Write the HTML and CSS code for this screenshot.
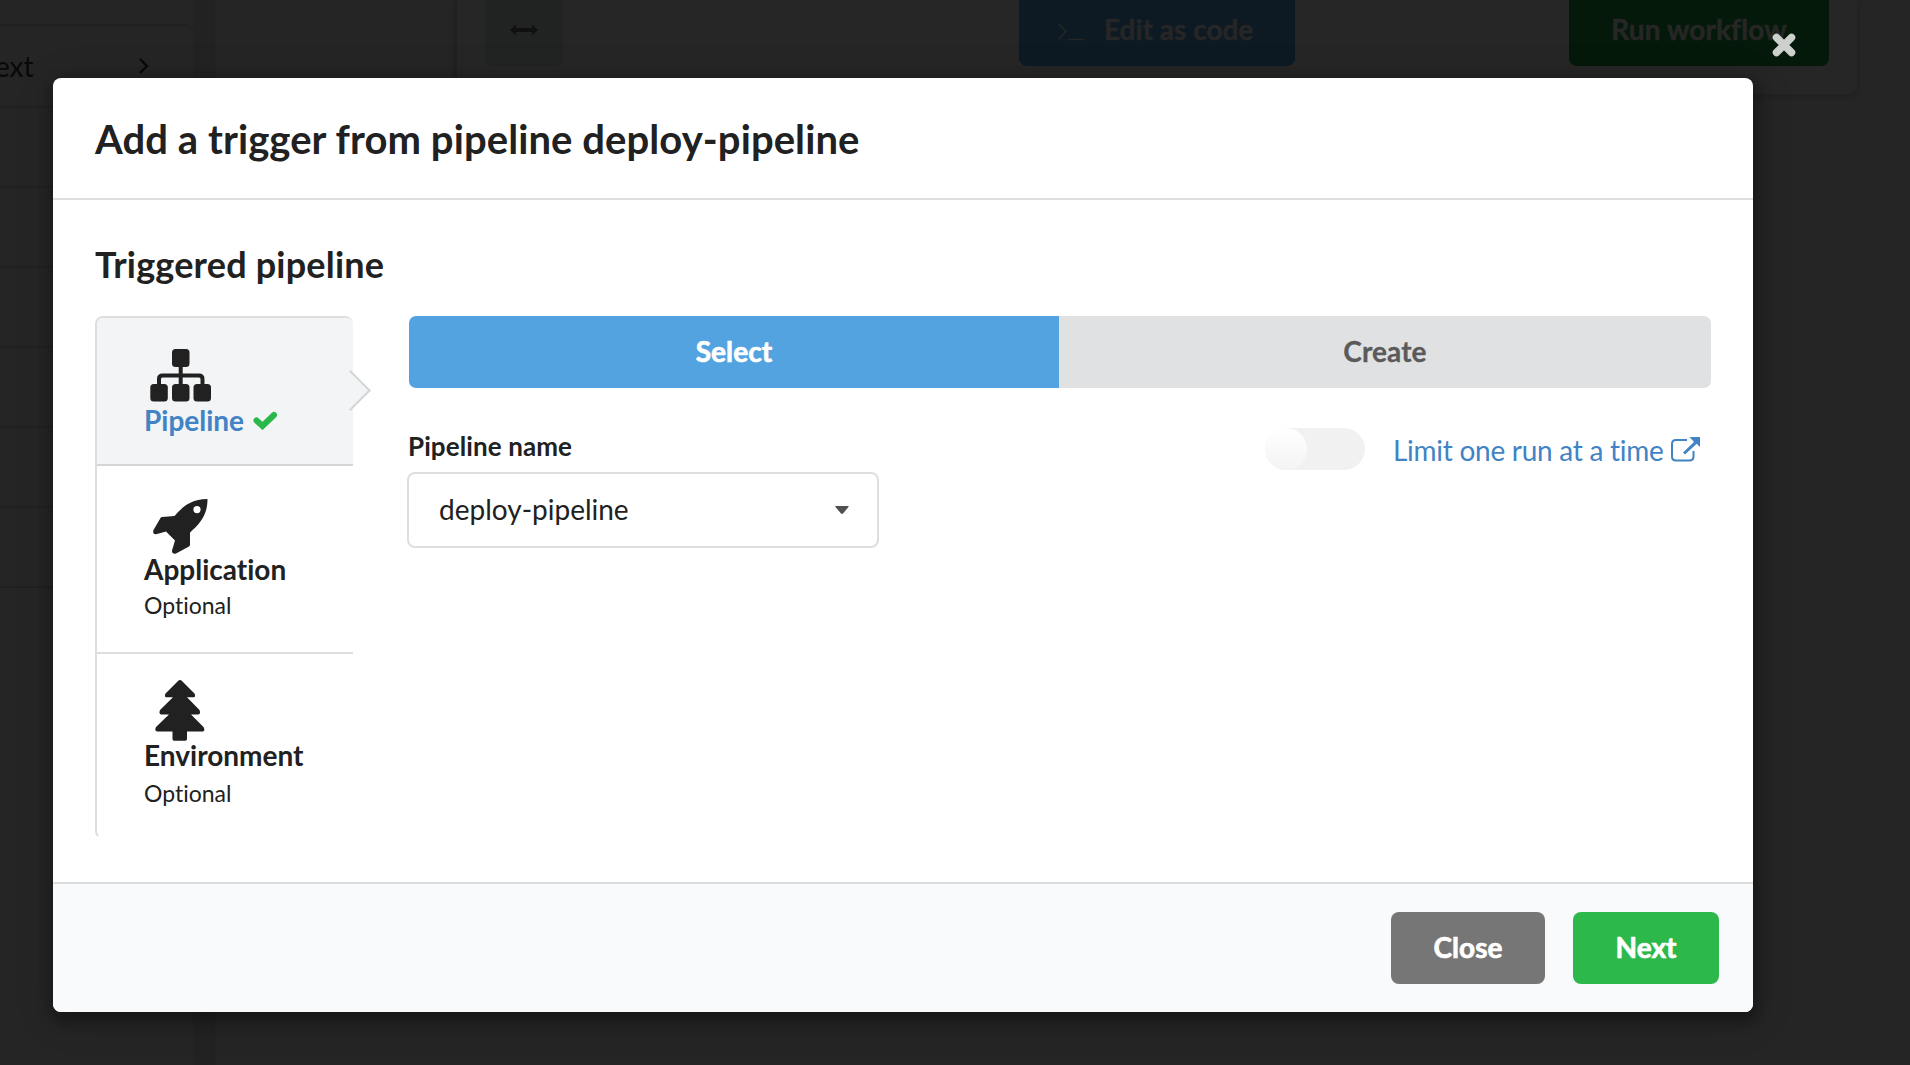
FILE: index.html
```html
<!DOCTYPE html>
<html lang="en">
<head>
<meta charset="utf-8">
<title>Add a trigger</title>
<link rel="stylesheet" href="styles.css">
</head>
<body>
<div class="page">
  <aside class="sidebar">
    <ul class="menu">
      <li class="menu-item first"><span>ext</span>
        <svg class="chevron" width="11" height="16" viewBox="0 0 11 16"><path d="M2 1l7 7-7 7" fill="none" stroke="currentColor" stroke-width="2.2"/></svg>
      </li>
      <li class="menu-item"></li><li class="menu-item"></li><li class="menu-item"></li>
      <li class="menu-item"></li><li class="menu-item"></li><li class="menu-item last"></li>
    </ul>
  </aside>
  <div class="gutter"></div>
  <main class="workspace">
    <div class="toolbar">
      <div class="tool"><svg width="28" height="12" viewBox="0 0 28 12"><path d="M0 6l6-5.500v3.500h16V.5l6 5.500-6 5.500V8H6v3.500z" fill="currentColor"/></svg></div>
      <div class="tool-btn code"><svg width="28" height="18" viewBox="0 0 28 18"><path d="M2 1l7 7.500-7 7.500M11 16.500h16" fill="none" stroke="currentColor" stroke-width="1.500"/></svg><span>Edit as code</span></div>
      <div class="tool-btn run">Run workflow</div>
    </div>
  </main>
</div>

<div class="dimmer">
  <svg class="dismiss" width="24" height="24" viewBox="0 0 24 24"><path d="M4.500 4.500l15 15M19.500 4.500l-15 15" stroke="currentColor" stroke-width="7.500" stroke-linecap="round"/></svg>
  <section class="modal">
    <header class="modal-header">Add a trigger from pipeline deploy-pipeline</header>
    <div class="modal-content">
      <h3 class="title">Triggered pipeline</h3>
      <div class="columns">
        <nav class="steps">
          <a class="step active">
            <svg class="icon-pipeline" width="62" height="54" viewBox="0 0 62 54"><g fill="currentColor"><rect x="22" y="0" width="17.500" height="18" rx="3.500"/><rect x="0.300" y="35" width="17.500" height="17.500" rx="3.500"/><rect x="22" y="35" width="17.500" height="17.500" rx="3.500"/><rect x="43.500" y="35" width="17.500" height="17.500" rx="3.500"/></g><path d="M9 36v-6q0-3.500 3.500-3.500h36.500q3.500 0 3.500 3.500v6M30.700 16v20" fill="none" stroke="currentColor" stroke-width="4"/></svg>
            <div class="step-title">Pipeline<svg class="check" width="25" height="19" viewBox="0 0 25 19"><path d="M3.500 9.500l6 5.500L21 4" fill="none" stroke="currentColor" stroke-width="6" stroke-linejoin="miter" stroke-linecap="round"/></svg></div>
          </a>
          <a class="step application">
            <svg width="55" height="55" viewBox="0 0 55 55"><path fill="currentColor" fill-rule="evenodd" d="M54.500 0C36 .5 29.500 8.500 21.500 17L9 18Q8 18 7.500 19L.5 31Q-1 36 4 35l9-2.500 9 9L19 51.500q-.5 4 4 3L36 47.500q1-.5 1-2V33.500C47 24.500 54.500 16.500 54.500 0zM44 7a3.600 3.600 0 1 0 0 7.200A3.600 3.600 0 0 0 44 7z"/></svg>
            <div class="step-title">Application</div>
            <div class="step-note">Optional</div>
          </a>
          <a class="step environment">
            <svg width="50" height="61" viewBox="0 0 50 61"><path fill="currentColor" d="M23 1Q25 -.8 27 1L39.500 13.500Q41 17 38.500 17.300H32L44.500 30Q46 34 43.500 34.500H36L48.500 47Q50.500 51 48 51.500H32V59q0 1.700-1.700 1.700H19Q17.500 60.700 17.500 59V51.500H2Q-.8 51 1 47L14 34.500H6Q3.500 34 5 30L18 17.300H11.500Q9 17 10.500 13.500z"/></svg>
            <div class="step-title">Environment</div>
            <div class="step-note">Optional</div>
          </a>
        </nav>
        <div class="form">
          <div class="switcher"><button class="tab selected">Select</button><button class="tab">Create</button></div>
          <div class="fields">
            <div class="field">
              <label class="label">Pipeline name</label>
              <div class="dropdown"><span>deploy-pipeline</span><svg width="14" height="8" viewBox="0 0 14 8"><path d="M0 .5Q0 0 1 0H13q1 0 .7.800L8 7.500q-1 .8-2 0L.3.800z" fill="currentColor"/></svg></div>
            </div>
            <div class="limit">
              <span class="toggle"><span class="knob"></span></span>
              <a class="link">Limit one run at a time</a>
              <svg class="external" width="29" height="25" viewBox="0 0 29 25"><path d="M16 3H5Q1 3 1 7v12.500q0 4 4 4h13.500q4 0 4-4V14" fill="none" stroke="currentColor" stroke-width="2"/><path d="M18.500 0H29v10l-3.300-3.200L14 17.500l-2-2L23 5z" fill="currentColor"/></svg>
            </div>
          </div>
        </div>
      </div>
    </div>
    <footer class="actions"><button class="btn close">Close</button><button class="btn next">Next</button></footer>
  </section>
</div>
</body>
</html>
```
FILE: styles.css
```css
* { box-sizing: border-box; }
html, body { margin: 0; height: 100%; overflow: hidden; }
body { font-family: Lato, "Liberation Sans", sans-serif; font-size: 28px; line-height: 40px; background: #252525; color: #212121; }
button { font: inherit; border: 0; padding: 0; }
svg { display: block; flex: none; }

/* Dimmed page behind the dialog */
.page { display: flex; height: 1065px; }
.sidebar { width: 193px; padding-top: 24px; }
.menu { list-style: none; margin: 0; padding: 0; border-top: 2px solid #212121; border-top-right-radius: 8px; border-bottom: 2px solid #202020; }
.menu-item { height: 80px; border-bottom: 2px solid #212121; }
.menu-item.first { display: flex; align-items: center; justify-content: space-between; padding: 0 44px 0 0; height: 82px; color: #080808; }
.menu-item.first span { margin-left: -5px; }
.menu-item.last { height: 73px; border: 0; }
.menu-item.last { height: 78px; }
.gutter { width: 22px; background: #222; border-right: 1px solid #202020; }
.workspace { flex: 1; padding: 0 53px 0 240px; }
.toolbar { display: flex; height: 94px; padding-left: 28px; border-left: 2px solid #202020; border-radius: 0 0 8px 0; background: #262626; box-shadow: 0 2px 4px #1f1f1f; }
.tool { display: flex; justify-content: center; width: 78px; height: 66px; padding-top: 24px; border-radius: 0 0 8px 8px; background: #202322; color: #101010; }
.tool-btn { height: 66px; padding-top: 9px; border-radius: 0 0 8px 8px; font-weight: 700; color: #262626; -webkit-text-stroke: .5px; }
.code { display: flex; gap: 19px; width: 276px; margin-left: 456px; padding-left: 38px; background: #0d1a23; }
.code svg { margin-top: 14px; }
.run { width: 260px; margin-left: 274px; background: #05190a; text-align: center; letter-spacing: .1px; font-variant-ligatures: normal; }

/* Dialog */
.dimmer { position: absolute; inset: 0; padding: 78px 0 0 53px; }
.dismiss { position: absolute; left: 1772px; top: 33px; color: #ced0ce; }
.modal { display: flex; flex-direction: column; width: 1700px; height: 934px; border-radius: 8px; overflow: hidden; background: #fff; box-shadow: 2px 6px 14px 4px rgba(0,0,0,.3), 2px 6px 40px 4px rgba(0,0,0,.1); font-variant-ligatures: none; }
.modal-header { height: 122px; padding: 36px 42px 0; border-bottom: 2px solid #dededf; font-size: 40px; line-height: 51px; font-weight: 700; letter-spacing: .08px; }
.modal-content { flex: 1; padding: 41px 42px 0; }
.title { margin: 0 0 29px; height: 46px; font-size: 36px; line-height: 46px; font-weight: 700; letter-spacing: .2px; }
.columns { display: flex; }
.steps { width: 258px; height: 523px; border: 2px solid #dededf; border-right: 0; border-bottom-color: transparent; border-radius: 8px; }
.step { position: relative; display: block; padding-left: 47px; border-bottom: 2px solid #dededf; }
.active { height: 148px; padding-top: 31px; border-bottom-color: #d4d5d6; border-radius: 6px 6px 0 0; background: #f3f4f5; }
.active::after { content: ""; position: absolute; right: -12px; top: 58px; width: 27px; height: 27px; border: solid #d4d5d6; border-width: 0 2px 2px 0; background: linear-gradient(135deg, transparent 50%, #f3f4f5 50%); transform: rotate(-45deg); }
.icon-pipeline { margin-left: 6px; }
.step-title { display: flex; align-items: center; font-size: 28px; line-height: 34px; font-weight: 700; }
.active .step-title { color: #4183c4; }
.check { margin-left: 9px; color: #2ab84a; }
.application { height: 188px; padding-top: 33px; }
.application svg { margin: 0 0 -2px 9px; }
.application .step-note { margin-top: 1px; }
.environment { border: 0; padding-top: 26px; }
.environment svg { margin: 0 0 -3px 11px; }
.environment .step-note { margin-top: 3px; }
.step-note { font-size: 23px; line-height: 36px; }
.form { flex: 1; padding-left: 56px; }
.switcher { display: flex; height: 72px; border-radius: 7px; overflow: hidden; }
.tab { flex: 1; padding-bottom: 2px; background: #e0e1e2; color: #5a5a5a; font-weight: 700; letter-spacing: .1px; -webkit-text-stroke: .3px; }
.tab.selected { flex: 0 0 650px; background: #54a3e1; color: #fff; -webkit-text-stroke: .7px; }
.fields { display: flex; justify-content: space-between; }
.field { width: 472px; margin-left: -2px; padding-top: 40px; }
.label { display: block; height: 44px; padding-left: 1px; font-size: 26px; line-height: 36px; font-weight: 700; letter-spacing: .1px; }
.dropdown { display: flex; align-items: center; justify-content: space-between; height: 76px; padding: 0 28px 2px 30px; border: 2px solid #dededf; border-radius: 8px; }
.dropdown svg { margin-top: 2px; color: #505050; }
.limit { display: flex; align-items: center; height: 42px; margin: 40px 11px 0 0; color: #4183c4; }
.toggle { width: 100px; height: 42px; margin-right: 28px; border-radius: 21px; background: #f1f1f1; }
.knob { display: block; width: 42px; height: 42px; border-radius: 50%; background: linear-gradient(#fff, #f4f4f4); }
.link { width: 271px; padding-top: 1px; letter-spacing: -.27px; white-space: nowrap; }
.external { margin: 0 0 0 7px; }
.actions { display: flex; justify-content: flex-end; gap: 28px; height: 130px; padding: 28px 34px 0; border-top: 2px solid #dadcde; background: #f9fafb; }
.btn { height: 72px; padding-bottom: 2px; border-radius: 8px; color: #fff; font-weight: 700; -webkit-text-stroke: .7px; }
.close { width: 154px; background: #767676; }
.next { width: 146px; background: #2db84b; }
```
